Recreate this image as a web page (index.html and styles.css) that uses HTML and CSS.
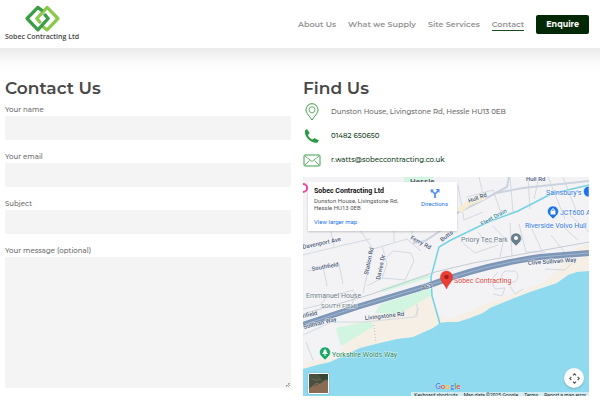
FILE: index.html
```html
<!DOCTYPE html>
<html lang="en">
<head>
<meta charset="utf-8">
<meta name="viewport" content="width=device-width, initial-scale=1">
<title>Contact Us</title>
<link rel="stylesheet" href="styles.css">
</head>
<body>
<header class="site-header">
  <a class="brand" href="#">
    <svg class="brand-mark" viewBox="0 0 34 26" aria-hidden="true">
      <g fill="none" stroke-width="3.200" stroke-linejoin="round" stroke-linecap="round">
        <path stroke="#8bc94b" d="M18 21.500 21.500 24 32 13 21.500 2.200 11.500 13l3 3.500"/>
        <path stroke="#3c9c48" d="M16 4.800 12.500 2.200 2 13l10.500 11L22.500 13l-3-3.500"/>
      </g>
    </svg>
    <span class="brand-name">Sobec Contracting Ltd</span>
  </a>
  <nav class="nav">
    <a href="#">About Us</a>
    <a href="#">What we Supply</a>
    <a href="#">Site Services</a>
    <a class="current" href="#">Contact</a>
    <a class="enquire" href="#">Enquire</a>
  </nav>
</header>
<main class="content">
  <section class="column">
    <h1>Contact Us</h1>
    <form class="form">
      <div class="field"><label for="name">Your name</label><input id="name" type="text"></div>
      <div class="field"><label for="email">Your email</label><input id="email" type="email"></div>
      <div class="field"><label for="subject">Subject</label><input id="subject" type="text"></div>
      <div class="field"><label for="message">Your message (optional)</label><textarea id="message"></textarea></div>
    </form>
  </section>
  <section class="column">
    <h2>Find Us</h2>
    <ul class="details">
      <li>
        <svg viewBox="0 0 18 18" aria-hidden="true"><g fill="none" stroke="#3c9c48"><path d="M9 17C7 13.500 3 10.500 3 6.700a6 6 0 0 1 12 0C15 10.500 11 13.500 9 17Z"/><circle cx="9" cy="6.800" r="3" stroke-width=".8"/></g></svg>
        <span>Dunston House, Livingstone Rd, Hessle HU13 0EB</span>
      </li>
      <li>
        <svg viewBox="0 0 18 18" aria-hidden="true"><path fill="#2f9a45" d="M2 3.500 4 2l2.700 4-1.700 2c.8 2 2.300 3.600 4.500 4.600l2-1.600L16 13.500l-1.500 2C10 17.500.5 10.500 2 3.500Z"/></svg>
        <a href="#">01482 650650</a>
      </li>
      <li>
        <svg viewBox="0 0 18 18" aria-hidden="true"><g fill="none" stroke="#3c9c48"><rect x="1" y="4" width="16" height="11" rx="1"/><path stroke-width=".8" d="m2 5 7 5.500L16 5M2 14l4.500-4.500M16 14l-4.500-4.500"/></g></svg>
        <a href="#">r.watts@sobeccontracting.co.uk</a>
      </li>
    </ul>
    <div class="map">
      <svg class="map-canvas" viewBox="0 0 286 219" preserveAspectRatio="xMidYMid slice" role="img" aria-label="Map of Hessle">
        <rect width="286" height="219" fill="#f3f2f4"/>
        <path fill="#f5efe5" d="M0 187 38 176 40 166 32 152 74 139 128 116 140 140 150 141 180 128 240 104 262 85 286 78V120L130 165 0 200Z"/>
        <path fill="#f3f2f4" d="M126 113 136 137Q141 143 150 141L180 128 240 106 260 87 240 82 180 93Z"/>
        <path fill="#f5efe5" d="M272 72 286 66V78L272 78Z"/>
        <g fill="#d1f5e0">
          <path d="M33 151 67 144 71 149 38 169ZM72 136 78 127 128 111 130 117 96 137ZM78 112l46-15 4 3-48 15ZM101 0h29v12h-29Z"/>
        </g>
        <path fill="#8fdaee" d="M0 192 14 188 27 185 40 179 57 171 77 166 94 162 110 160 130 151 137 146 144 145 155 145 167 141 180 136 187 131 204 124 227 115 245 109 254 106 265 98 274 95 286 94V219H0Z"/>
        <g fill="none" stroke="#d3dae2" stroke-width="1">
          <path d="M0 78 20 73 67 62M28 55 31 69M5 94 36 87 40 107M20 90 24 109M57 53 70 72 60 116M70 72 104 62 118 74M91 53V65M109 53V63M79 69 84 87 79 101 102 103 111 84 108 76 90 74 84 80M79 101 64 109M0 132 17 128 24 120 51 113M52 115 49 128M0 158 29 145 60 145 112 140 116 131M3 165l7 18M114 127v13"/>
          <path d="M155 8 161 43 180 35M164 20 190 13 198 36M176 0 181 22M207 0 210 35M225 0 227 32M236 0 231 22M245 0 262 42M260 0 273 33M190 49 201 61 197 80M175 55 183 66 195 65M207 46 209 79M216 47 223 75 242 75M229 52 239 74M248 58 263 77M256 46 275 63M267 38 286 55M160 66 172 76 195 68M242 92l20 1 9-9M195 95l-7 8 4 9M202 94q-7 5 0 11h10q6-6 0-11ZM192 112l10-1-3 8-9-2M207 109l5 8 8-5"/>
        </g>
        <path fill="none" stroke="#cbd3df" stroke-width="2" d="M144 50 150 38 178 24 193 16 220 11 286 4M178 24 204 10 206 0M143 50 122 64 110 66"/>
        <path fill="none" stroke="#f8ecd2" stroke-width="5" d="M156 34 166 26 182 20"/>
        <path fill="none" stroke="#72d2e4" stroke-width="1.500" d="M286 8 248 17 215 34 185 45 148 63 136 70 128 100 129 119 137 147"/>
        <path fill="none" stroke="#c5ccd5" d="M0 137 66 118 132 95 170 86 286 65"/>
        <path fill="none" stroke="#7d97b8" stroke-width="6" d="M0 148 54 130 124 109Q180 88 237 80L286 76"/>
        <path fill="none" stroke="#a1b5ce" stroke-width="1" d="M0 148 54 130 124 109Q180 88 237 80L286 76"/>
        <path fill="none" stroke="#b6c1c9" stroke-dasharray="1 2" d="m71 148 2 18"/>
        <g class="road">
          <text x="107" y="7" class="town">Hessle</text>
          <text transform="translate(166 26) rotate(-20)">Hull Rd</text>
          <text x="223" y="4">Hull Rd</text>
          <text transform="translate(0 72) rotate(-12)">Davenport Ave</text>
          <text transform="translate(9 94) rotate(-10)">Southfield</text>
          <text transform="translate(65 98) rotate(-78)">Station Rd</text>
          <text transform="translate(77 103) rotate(-78)">Davies Dr</text>
          <text transform="translate(107 62) rotate(28)">Ferry Rd</text>
          <text transform="translate(139 65) rotate(-37)">Butts</text>
          <text transform="translate(119 113) rotate(-14)">A63</text>
          <text transform="translate(225 88) rotate(-4)">Clive Sullivan Way</text>
          <text transform="translate(1 152) rotate(-14)">Sullivan Way</text>
          <text transform="translate(0 141) rotate(-12)">nfield</text>
          <text transform="translate(62 143) rotate(-6)">Livingstone Rd</text>
          <text transform="translate(179 49) rotate(-29)" class="drain">Fleet Drain</text>
        </g>
        <g class="place">
          <text x="158" y="65">Priory Tec Park</text>
          <text x="3" y="121">Emmanuel House</text>
          <text x="18" y="131" class="district">SOUTH FIELD</text>
          <text x="243" y="18" class="shop">Sainsbury's</text>
          <text x="257" y="38" class="shop">JCT600 A</text>
          <text x="222" y="51" class="shop">Riverside Volvo Hull</text>
          <text x="29" y="180" class="trail">Yorkshire Wolds Way</text>
          <text x="151" y="106" class="venue">Sobec Contracting</text>
        </g>
        <circle cx="0" cy="11" r="4" fill="#fff" stroke="#ed46a6" stroke-width="2"/>
        <path fill="#1a73e8" stroke="#fff" stroke-width=".5" d="M286 9a5 5 0 0 0 0 11ZM250 42l-3-3a5.500 5.500 0 1 1 6 0Z"/>
        <path fill="#fff" d="M247.500 33.500h5v4h-5Z"/><path fill="none" stroke="#fff" d="M248.500 33.500q1.500-4 3 0"/>
        <path fill="#68808e" stroke="#fff" stroke-width=".5" d="m213 69-3-3a5.500 5.500 0 1 1 6 0Z"/><circle cx="213" cy="61" r="2" fill="#fff"/>
        <path fill="#18a867" stroke="#fff" stroke-width=".5" d="m22 183-3-3a5.500 5.500 0 1 1 6 0Z"/><path fill="#fff" d="m22 172-2 2.500h1l-2 2.500h2.500v2h1v-2H25l-2-2.500h1Z"/>
        <path fill="#ea3e35" stroke="#c52e29" stroke-width=".5" d="M143.500 112c-1-4-6-7-6-12a6 6 0 0 1 12 0c0 5-5 8-6 12Z"/><circle cx="143.500" cy="100" r="2.300" fill="#a71d1a"/>
      </svg>
      <div class="place-card">
        <div class="place-info">
          <strong>Sobec Contracting Ltd</strong>
          <p>Dunston House, Livingstone Rd, Hessle HU13 0EB</p>
          <a href="#">View larger map</a>
        </div>
        <a class="directions" href="#">
          <svg viewBox="0 0 10 10" aria-hidden="true"><path fill="none" stroke="#4a8ff0" stroke-width="1.700" d="M5 10V6L1.500 2.500M5 6l3-3"/><path fill="#4a8ff0" d="M5.500 1H9.500V5ZM.5 1.500H4L1 5Z"/></svg>
          Directions
        </a>
      </div>
      <button class="satellite" type="button" aria-label="Show satellite imagery">
        <svg viewBox="0 0 18 18" aria-hidden="true"><path fill="#4b5140" d="M0 0h18v18H0Z"/><path fill="#8b6b52" d="M0 14 18 6v12H0Z"/><path fill="none" stroke="#85745c" d="m1 14 6-5 4 1 6-5"/><path fill="none" stroke="#626650" d="m2 4 5 2 5-2"/><path fill="#354634" d="M9 0h9v5l-6 1Z"/></svg>
      </button>
      <div class="google"><span class="blue">G</span><span class="red">o</span><span class="yellow">o</span><span class="blue">g</span><span class="green">l</span><span class="red">e</span></div>
      <button class="pan" type="button" aria-label="Map camera controls">
        <svg viewBox="0 0 14 14" aria-hidden="true"><path fill="none" stroke="#555" stroke-width="1.500" d="m5 3 2-2 2 2M5 11l2 2 2-2M3 5 1 7l2 2M11 5l2 2-2 2"/></svg>
      </button>
      <div class="credits"><span>Keyboard shortcuts</span><span>Map data ©2025 Google</span><span>Terms</span><span>Report a map error</span></div>
    </div>
  </section>
</main>
</body>
</html>
```
FILE: styles.css
```css
* { box-sizing: border-box; }
body {
  margin: 0;
  background: #fff;
  color: #6c6c6c;
  font: 500 7px/12px Montserrat, Inter, sans-serif;
}
a { color: inherit; text-decoration: none; }
h1, h2, p, ul { margin: 0; padding: 0; }
.site-header {
  display: flex;
  justify-content: space-between;
  align-items: center;
  height: 48px;
  padding: 0 11px 0 5px;
}
.brand { display: flex; flex-direction: column; align-items: center; padding-bottom: 2px; }
.brand-mark { width: 35px; height: 27px; }
.brand-name { color: #444; font: 600 7px/9px "Open Sans", sans-serif; }
.nav { display: flex; align-items: center; gap: 12px; color: #929292; font-size: 8px; font-weight: 600; line-height: 12px; }
.current { border-bottom: 1px solid #174b1d; }
.enquire {
  padding: 4px 10px;
  border-radius: 2px;
  background: #032805;
  color: #fff;
  font-weight: 700;
  line-height: 11px;
}
.content {
  display: grid;
  grid-template-columns: 1fr 1fr;
  gap: 12px;
  padding: 28px 11px 4px 5px;
  background: linear-gradient(#ebebeb, #fafafa 14px, #fff 24px);
}
h1, h2 { color: #484848; font-size: 17px; font-weight: 600; line-height: 24px; }
.form { display: grid; gap: 11px; padding-top: 4px; }
.field { display: flex; flex-direction: column; }
.field input, .field textarea {
  width: 100%;
  height: 24px;
  margin: 0;
  padding: 4px;
  border: 0;
  border-radius: 1px;
  background: #f4f4f4;
  font: inherit;
}
.field textarea { height: 131px; resize: vertical; }
.field textarea::-webkit-resizer {
  background: linear-gradient(135deg, #0000 50%, #aaa 50% 62%, #0000 62% 76%, #aaa 76% 88%, #0000 88%) 9px 9px / 5px 5px no-repeat;
}
.details { list-style: none; padding-bottom: 4px; }
.details li { display: flex; align-items: center; gap: 10px; height: 24px; }
.details svg { width: 18px; height: 18px; }
.details a { color: #123e1b; }
.map {
  position: relative;
  height: 219px;
  margin-top: 1px;
  overflow: hidden;
  font-family: Roboto, sans-serif;
  font-weight: 400;
}
.map-canvas { display: block; width: 100%; height: 100%; }
.map-canvas text { paint-order: stroke; stroke: #fffa; stroke-width: 1px; }
.road { fill: #4c607c; font-size: 6px; font-weight: 500; }
.road .town { fill: #414b55; font-size: 8px; }
.road .drain { fill: #368b9d; }
.place { fill: #6d7c89; font-size: 7px; }
.place .district { font-size: 6px; }
.place .shop { fill: #3478df; }
.place .trail { fill: #25875e; }
.place .venue { fill: #d6443d; }
.place-card {
  position: absolute;
  top: 5px;
  left: 5px;
  display: flex;
  justify-content: space-between;
  width: 149px;
  height: 49px;
  padding: 4px 9px 4px 6px;
  background: #fff;
  box-shadow: 0 1px 2px #0003;
  color: #555;
  font-size: 6px;
  line-height: 7px;
}
.place-info { width: 90px; }
.place-info strong { display: block; color: #111; font-size: 7px; font-weight: 700; line-height: 11px; }
.place-info a { display: block; padding-top: 7px; color: #1a73e8; }
.directions { display: flex; flex-direction: column; align-items: center; gap: 2px; padding-top: 2px; color: #1a73e8; }
.directions svg { width: 10px; height: 10px; }
.satellite {
  position: absolute;
  bottom: 2px;
  left: 5px;
  width: 21px;
  height: 21px;
  padding: 0;
  border: 1px solid #fff;
  border-radius: 1px;
  box-shadow: 0 0 1px #0008;
}
.satellite svg { display: block; width: 100%; height: 100%; }
.google {
  position: absolute;
  bottom: 4px;
  left: 132px;
  font: 700 8px/12px Lato, sans-serif;
  text-shadow: 0 0 1px #fff;
}
.blue { color: #4285f4; }
.red { color: #ea4335; }
.yellow { color: #f4b400; }
.green { color: #34a853; }
.pan {
  position: absolute;
  right: 5px;
  bottom: 8px;
  display: grid;
  place-items: center;
  width: 20px;
  height: 20px;
  padding: 0;
  border: 0;
  border-radius: 50%;
  background: #fff;
  box-shadow: 0 1px 2px #0003;
}
.pan svg { width: 11px; height: 11px; }
.credits {
  position: absolute;
  right: 0;
  bottom: 0;
  display: flex;
  height: 4px;
  overflow: hidden;
  background: #d4edf3;
  color: #222;
  font-size: 5px;
  line-height: 7px;
}
.credits span { padding: 0 3px; }
```
